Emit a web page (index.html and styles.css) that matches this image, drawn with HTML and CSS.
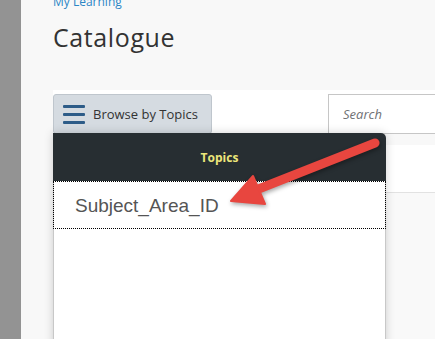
FILE: index.html
```html
<!DOCTYPE html>
<html lang="en">
<head>
    <meta charset="UTF-8">
    <title>Catalogue</title>
    <link rel="stylesheet" href="styles.css">
</head>
<body>
    <div class="sidebar"></div>
    <div class="main">
        <a class="breadcrumb" href="#">My Learning</a>
        <h1>Catalogue</h1>

        <div class="toolbar">
            <button class="browse">
                <span class="burger"><i></i><i></i><i></i></span>
                Browse by Topics
            </button>
            <input class="search" type="text" placeholder="Search">

            <div class="dropdown">
                <div class="dropdown-head">Topics</div>
                <div class="dropdown-list">
                    <div class="dropdown-item">Subject_Area_ID</div>
                </div>
            </div>
        </div>

        <div class="card">
            <div class="card-head"></div>
            <div class="card-body"></div>
        </div>
    </div>

    <!-- annotation arrow -->
    <svg class="callout" width="435" height="339" viewBox="0 0 435 339">
        <line x1="375" y1="143" x2="256" y2="190" stroke="#e8463f" stroke-width="9" stroke-linecap="round"/>
        <polygon points="231,201 253,176 265,204" fill="#e8463f" stroke="#e8463f" stroke-width="2" stroke-linejoin="round"/>
    </svg>
</body>
</html>
```

FILE: styles.css
```css
* {
    box-sizing: border-box;
}
html, body {
    margin: 0;
    height: 100%;
    overflow: hidden;
}
body {
    display: flex;
    background: #f7f7f7;
    font-family: "Open Sans", Arial, sans-serif;
}
.sidebar {
    width: 21px;
    flex: none;
    background: #939393;
}
.main {
    flex: 1;
    padding-left: 32px;
    background: #f8f8f8;
}
.breadcrumb {
    display: block;
    margin-top: -5px;
    font-size: 12px;
    line-height: 14px;
    color: #2b86c5;
    text-decoration: none;
}
h1 {
    margin: 13px 0 0;
    font-size: 25px;
    line-height: 30px;
    font-weight: 400;
    color: #333;
    letter-spacing: 0.6px;
}
.toolbar {
    position: relative;
    display: flex;
    align-items: flex-start;
    margin-top: 38px;
    height: 43px;
    padding-top: 4px;
    background: #fff;
}
.browse {
    display: flex;
    align-items: center;
    gap: 8px;
    width: 159px;
    height: 40px;
    padding: 0 0 0 9px;
    background: #d5dbe1;
    border: 1px solid #bfc6cd;
    border-radius: 3px;
    font-family: "Open Sans", Arial, sans-serif;
    font-size: 13px;
    color: #333;
}
.burger {
    display: flex;
    flex-direction: column;
    gap: 5px;
    width: 22px;
}
.burger i {
    display: block;
    height: 3px;
    background: #2d5c88;
    border-radius: 1px;
}
.search {
    margin-left: 116px;
    width: 140px;
    height: 40px;
    padding: 0 14px;
    border: 1px solid #c6c6c6;
    font-family: "Open Sans", Arial, sans-serif;
    font-size: 13px;
    outline: none;
}
.search::placeholder {
    color: #6f7275;
    font-style: italic;
}
.dropdown {
    position: absolute;
    top: 43px;
    left: 0;
    width: 333px;
    height: 220px;
    background: #fff;
    border-top-right-radius: 5px;
    box-shadow: 0 0 10px rgba(0,0,0,0.18);
    z-index: 2;
}
.dropdown-head {
    height: 48px;
    display: flex;
    align-items: center;
    justify-content: center;
    background: #272e32;
    border-top-right-radius: 5px;
    color: #ece67a;
    font-size: 12px;
    font-weight: 700;
}
.dropdown-list {
    height: 172px;
    border-left: 1px solid #c8c8c8;
    border-right: 1px solid #c8c8c8;
}
.dropdown-item {
    height: 48px;
    margin: 0 -1px;
    padding: 13px 0 0 21px;
    border: 1px dotted #000;
    font-family: "Liberation Sans", Arial, sans-serif;
    font-size: 19px;
    color: #555;
}
.card {
    margin-top: 12px;
    background: #fff;
}
.card-head {
    height: 48px;
    border-bottom: 1px solid #e2e2e2;
}
.card-body {
    height: 200px;
    background: #f9f9f9;
}
.callout {
    position: absolute;
    top: 0;
    left: 0;
    z-index: 3;
    pointer-events: none;
    filter: drop-shadow(1px 2px 2px rgba(0,0,0,0.35));
}
```
